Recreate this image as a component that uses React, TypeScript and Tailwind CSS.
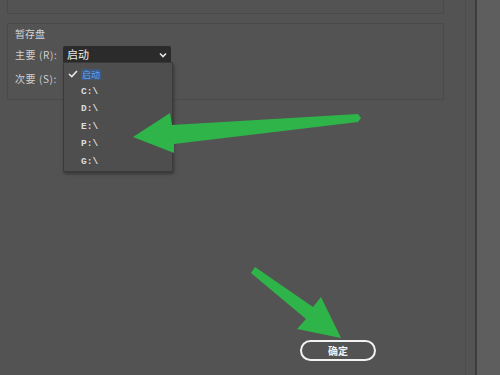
import React from "react";

const cjk = { fontFamily: '"Noto Sans CJK SC", "Noto Sans", sans-serif' };
const mono = { fontFamily: '"Liberation Mono", "DejaVu Sans Mono", monospace' };

export default function App() {
  const drives = ["C:\\", "D:\\", "E:\\", "P:\\", "G:\\"];
  return (
    <div className="relative flex w-[500px] h-[375px] overflow-hidden bg-[#535353]" style={cjk}>
      <div className="flex flex-col w-[465px] h-full">
        <div className="ml-[7px] w-[437px] h-[14px] border-x border-b border-[#4a4a4a]" />
        <div className="mt-[9px] ml-[7px] w-[437px] h-[77px] border border-[#4a4a4a] pl-[7px] pt-[3px]">
          <div className="text-[10px] leading-[14px] text-[#d2d2d2]">暂存盘</div>
          <div className="mt-[5px] flex items-center h-[17px]">
            <div className="w-[48px] text-[10px] tracking-[0.6px] text-[#d0d0d0] whitespace-nowrap">主要 (R):</div>
            <div className="flex items-center justify-between w-[108px] h-[17px] bg-[#2b2b2b] rounded-[2px] pl-[4px] pr-[4px]">
              <span className="text-[11px] leading-none text-[#ececec]">启动</span>
              <svg width="8" height="6" viewBox="0 0 8 6">
                <path d="M1 1.5 L4 4.5 L7 1.5" fill="none" stroke="#e6e6e6" strokeWidth="1.6" />
              </svg>
            </div>
          </div>
          <div className="mt-[7px] flex items-center h-[17px]">
            <div className="w-[48px] text-[10px] tracking-[0.6px] text-[#d0d0d0] whitespace-nowrap">次要 (S):</div>
          </div>
        </div>
        <div className="mt-auto flex justify-end pr-[89px] pb-[14px]">
          <button className="w-[76px] h-[21px] rounded-full border-2 border-[#f2f2f2] text-[10px] leading-none text-[#f2f2f2] font-bold">
            确定
          </button>
        </div>
      </div>
      <div className="w-[10px] h-full border-l border-[#4c4c4c]" />
      <div className="w-[2px] h-full bg-[#3d3d3d]" />
      <div className="flex-1 h-full bg-[#5e5e5e]" />

      <div className="absolute left-[63px] top-[62px] w-[110px] h-[110px] bg-[#4e4e4e] border border-[#3a3a3a] shadow-[1px_2px_3px_rgba(0,0,0,0.35)] pt-[2px]">
        <div className="flex items-center h-[18px]">
          <svg className="ml-[4px]" width="10" height="8" viewBox="0 0 10 8">
            <path d="M1 4 L3.8 6.6 L9 1" fill="none" stroke="#e8e8e8" strokeWidth="1.6" />
          </svg>
          <span className="ml-[3px] text-[9px] leading-[11px] px-[1px] bg-[#3f5878] text-[#5fa2f2]">启动</span>
        </div>
        {drives.map((d) => (
          <div key={d} className="flex items-center h-[17.5px] pl-[17px] text-[9.5px] font-bold text-[#dedede]" style={mono}>
            {d}
          </div>
        ))}
      </div>

      <svg className="absolute left-0 top-0 pointer-events-none" width="500" height="375" viewBox="0 0 500 375">
        <polygon
          points="133,137 170,113 172,125 358,114 361,118 358,122 174,144 174,153"
          fill="#2fb44a"
        />
        <polygon
          points="255,267 313,307 321,297 341,338 297,329 306,319 251,273"
          fill="#2fb44a"
        />
      </svg>
    </div>
  );
}
